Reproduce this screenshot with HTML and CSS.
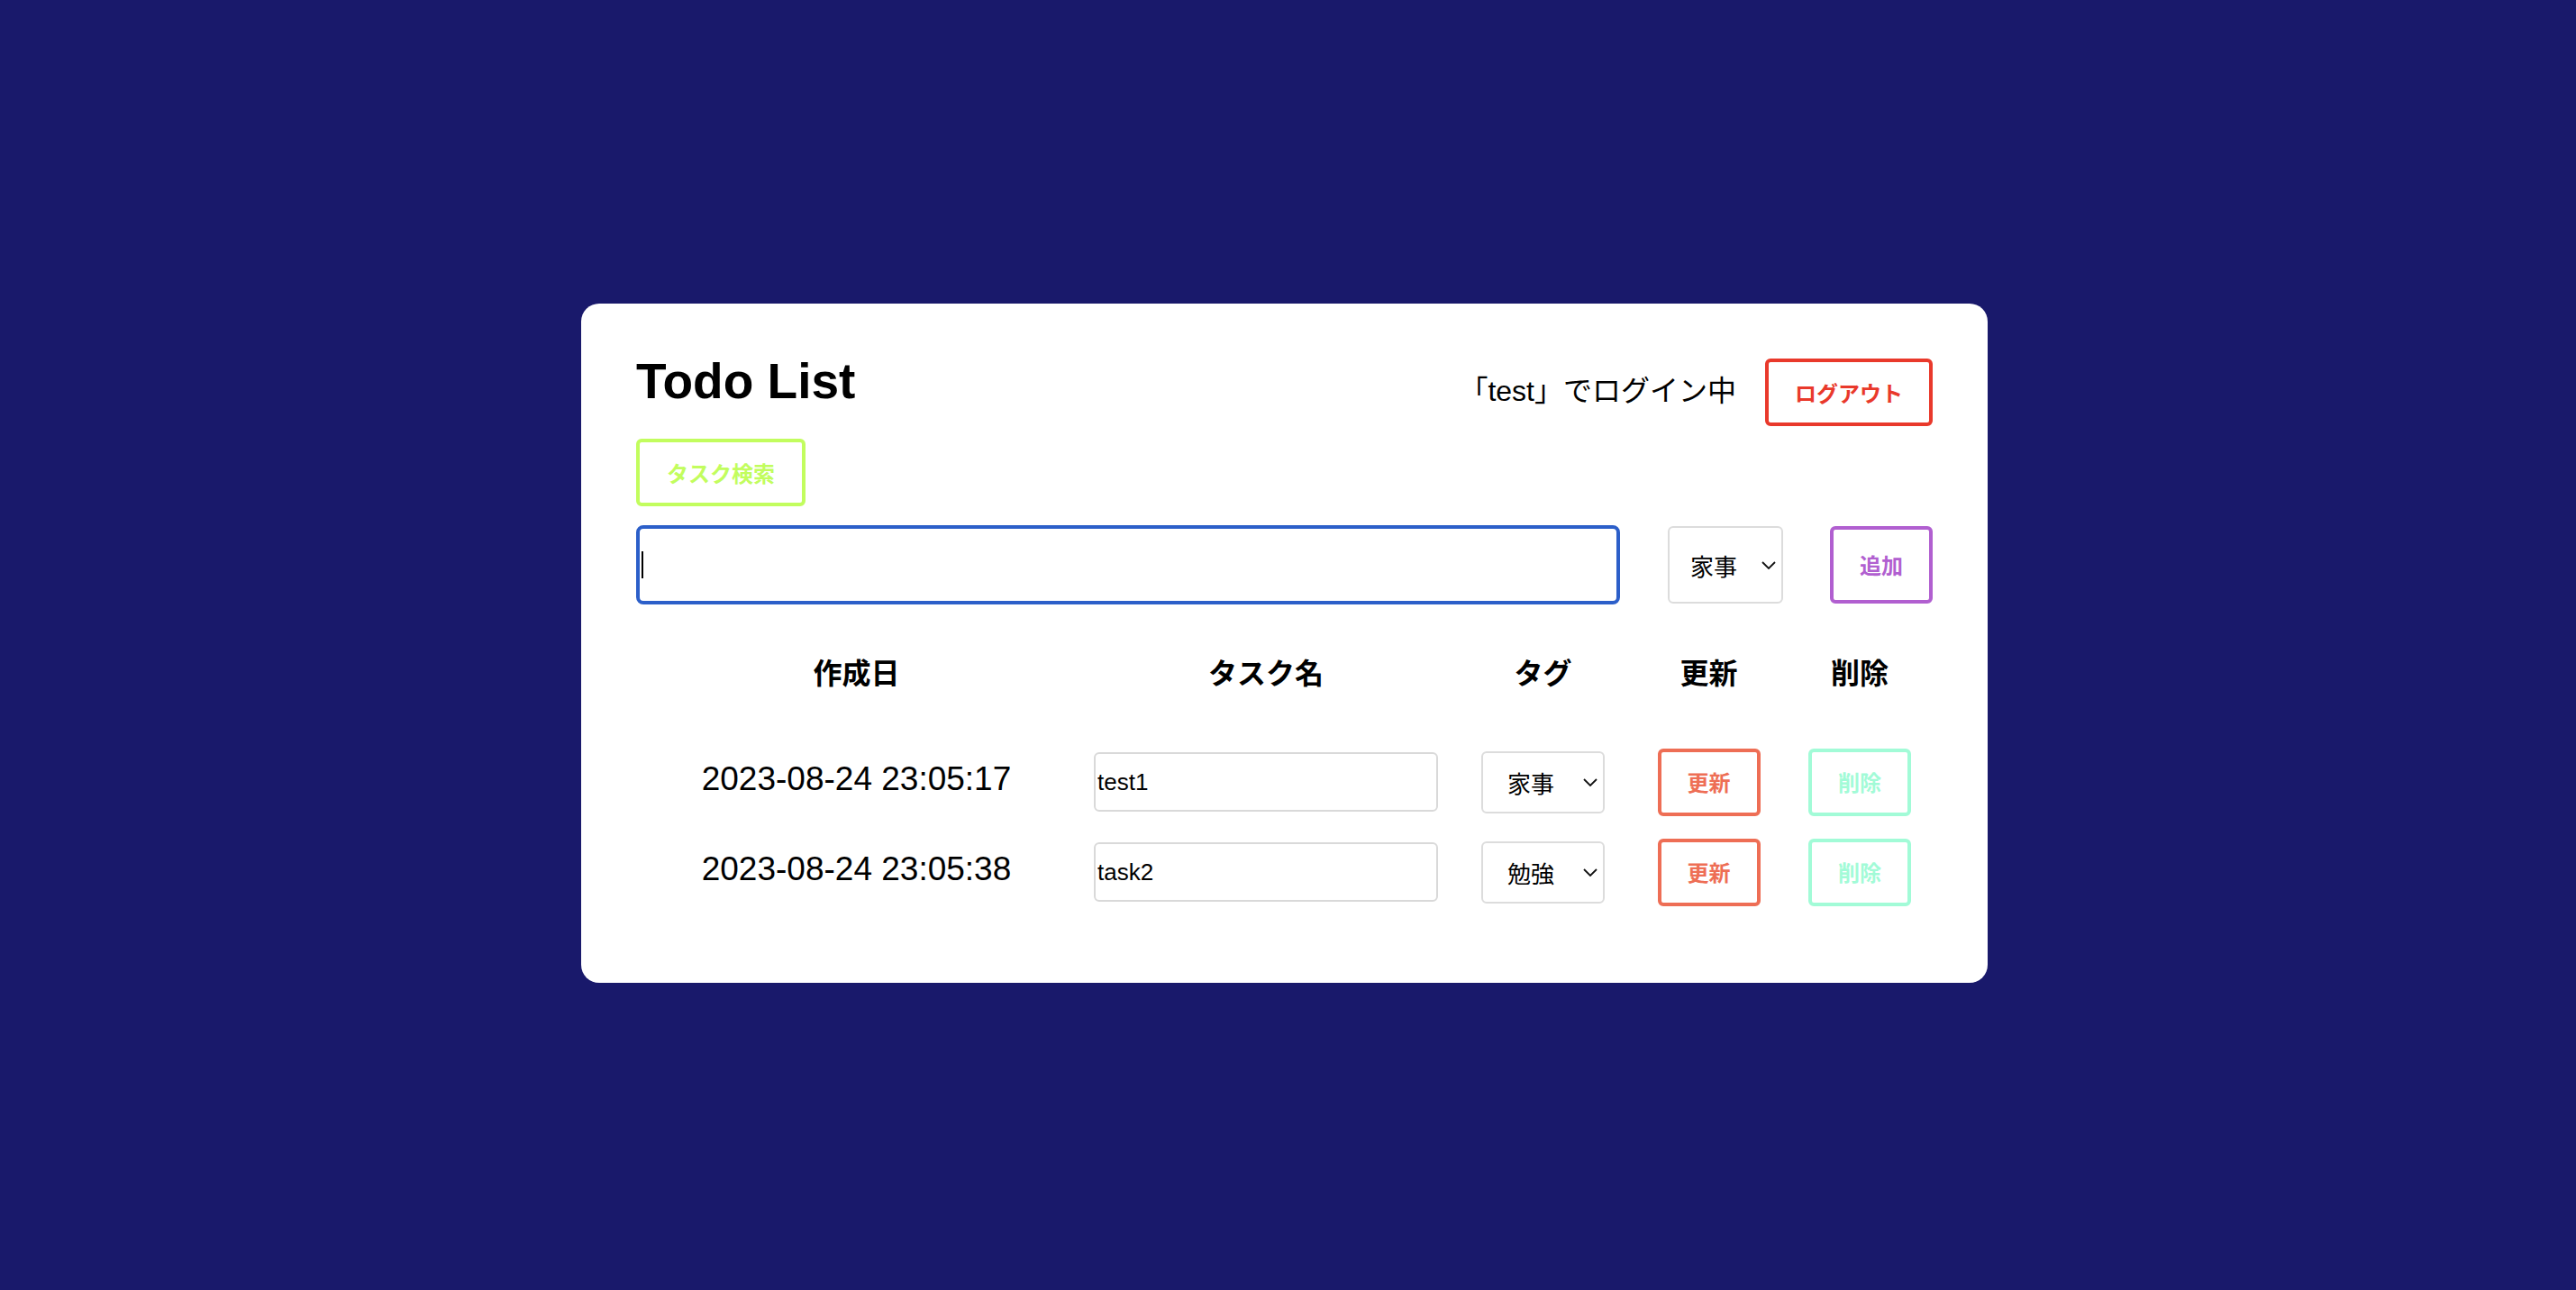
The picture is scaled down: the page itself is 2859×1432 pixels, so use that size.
FILE: index.html
```html
<!DOCTYPE html>
<html lang="ja">
<head>
<meta charset="utf-8">
<title>Todo List</title>
<link rel="stylesheet" href="styles.css">
</head>
<body>
<div class="page">
  <main class="card">
    <header class="top">
      <h1 class="title">Todo List</h1>
      <div class="user">
        <span class="user-name">「test」でログイン中</span>
        <button class="btn btn-logout">ログアウト</button>
      </div>
    </header>
    <button class="btn btn-search">タスク検索</button>
    <div class="add-row">
      <div class="field-main"><input class="main-input" type="text"></div>
      <div class="select-wrap select-lg">
        <select class="select"><option>家事</option><option>勉強</option></select>
        <svg class="chev" viewBox="0 0 16 9" width="16" height="9"><polyline points="1,1 8,8 15,1" fill="none" stroke="#111" stroke-width="1.8"/></svg>
      </div>
      <button class="btn btn-add">追加</button>
    </div>
    <div class="list">
      <div class="list-head">
        <div class="cell">作成日</div>
        <div class="cell">タスク名</div>
        <div class="cell">タグ</div>
        <div class="cell">更新</div>
        <div class="cell">削除</div>
      </div>
      <div class="list-row">
        <div class="cell date">2023-08-24 23:05:17</div>
        <div class="cell"><input class="task-input" type="text" value="test1"></div>
        <div class="cell">
          <div class="select-wrap select-sm">
            <select class="select"><option selected>家事</option><option>勉強</option></select>
            <svg class="chev" viewBox="0 0 16 9" width="16" height="9"><polyline points="1,1 8,8 15,1" fill="none" stroke="#111" stroke-width="1.8"/></svg>
          </div>
        </div>
        <div class="cell"><button class="btn btn-update">更新</button></div>
        <div class="cell"><button class="btn btn-delete">削除</button></div>
      </div>
      <div class="list-row">
        <div class="cell date">2023-08-24 23:05:38</div>
        <div class="cell"><input class="task-input" type="text" value="task2"></div>
        <div class="cell">
          <div class="select-wrap select-sm">
            <select class="select"><option>家事</option><option selected>勉強</option></select>
            <svg class="chev" viewBox="0 0 16 9" width="16" height="9"><polyline points="1,1 8,8 15,1" fill="none" stroke="#111" stroke-width="1.8"/></svg>
          </div>
        </div>
        <div class="cell"><button class="btn btn-update">更新</button></div>
        <div class="cell"><button class="btn btn-delete">削除</button></div>
      </div>
    </div>
  </main>
</div>
</body>
</html>
```

FILE: styles.css
```css
* { box-sizing: border-box; }

html, body {
  margin: 0;
  padding: 0;
  background: #19196b;
}

body {
  font-family: "Liberation Sans", "Noto Sans CJK JP", sans-serif;
  color: #000;
}

.page {
  min-height: 100vh;
  display: flex;
  align-items: center;
  justify-content: center;
  padding: 0 8px 4px 0;
}

.card {
  width: 1561px;
  background: #fff;
  border-radius: 20px;
  padding: 54px 61px 73px;
}

.top {
  display: flex;
  justify-content: space-between;
  align-items: flex-start;
}

.title {
  margin: 0;
  font-size: 55px;
  line-height: 64px;
  font-weight: 700;
}

.user {
  margin-top: 7px;
  display: flex;
  align-items: center;
  gap: 32px;
}

.user-name {
  font-size: 32px;
  line-height: 40px;
  margin-bottom: 4px;
}

.btn {
  font-family: "Noto Sans CJK JP", sans-serif;
  font-weight: 700;
  font-size: 24px;
  line-height: 1;
  background: #fff;
  border: 4px solid;
  border-radius: 6px;
  height: 75px;
  padding: 0 29px;
  cursor: pointer;
}

.btn-logout { color: #e9392b; border-color: #e9392b; }

.btn-search {
  display: block;
  margin-top: 14px;
  padding: 0 30px;
  color: #c2fd5e;
  border-color: #c2fd5e;
}

.add-row {
  margin-top: 21px;
  display: flex;
  align-items: center;
  gap: 52px;
  height: 88px;
}

.field-main {
  position: relative;
  flex: 1;
  height: 88px;
}

.field-main::after {
  content: "";
  position: absolute;
  left: 6px;
  top: 29px;
  width: 2px;
  height: 30px;
  background: #000;
}

.main-input {
  width: 100%;
  height: 100%;
  border: 4px solid #2c5fc9;
  border-radius: 8px;
  outline: none;
  font-size: 28px;
  padding: 0 6px;
  background: #fff;
}

.btn-add {
  height: 86px;
  color: #b15fd0;
  border-color: #b15fd0;
}

.select-wrap {
  position: relative;
}

.select {
  -webkit-appearance: none;
  appearance: none;
  width: 100%;
  height: 100%;
  border: 2px solid #dcdcdc;
  border-radius: 6px;
  background: #fff;
  color: #000;
  font-family: "Noto Sans CJK JP", sans-serif;
  font-size: 26px;
  outline: none;
}

.chev {
  position: absolute;
  right: 8px;
  top: 50%;
  margin-top: -4px;
  pointer-events: none;
}

.select-lg {
  width: 128px;
  height: 86px;
  margin-left: 1px;
}

.select-lg .select { padding-left: 23px; }

.select-sm {
  width: 137px;
  height: 69px;
}

.select-sm .select { padding-left: 27px; }

.list {
  margin-top: 43px;
}

.list-head,
.list-row {
  display: grid;
  grid-template-columns: 489px 420px 195px 173px 162px;
}

.list-head {
  height: 64px;
  font-family: "Noto Sans CJK JP", sans-serif;
  font-weight: 700;
  font-size: 32px;
  line-height: 40px;
  margin-bottom: 40px;
}

.list-head .cell {
  padding-bottom: 3px;
}

.list-row {
  height: 100px;
}

.cell {
  display: flex;
  align-items: center;
  justify-content: center;
}

.date {
  font-size: 37px;
  padding-bottom: 6px;
}

.task-input {
  width: 382px;
  height: 66px;
  border: 2px solid #d9d9d9;
  border-radius: 6px;
  padding: 0 2px;
  font-family: "Liberation Sans", sans-serif;
  font-size: 26px;
  color: #000;
  outline: none;
  background: #fff;
}

.btn-update { color: #ee6e55; border-color: #ee6e55; }
.btn-delete { color: #a2fbd7; border-color: #a2fbd7; }
```
